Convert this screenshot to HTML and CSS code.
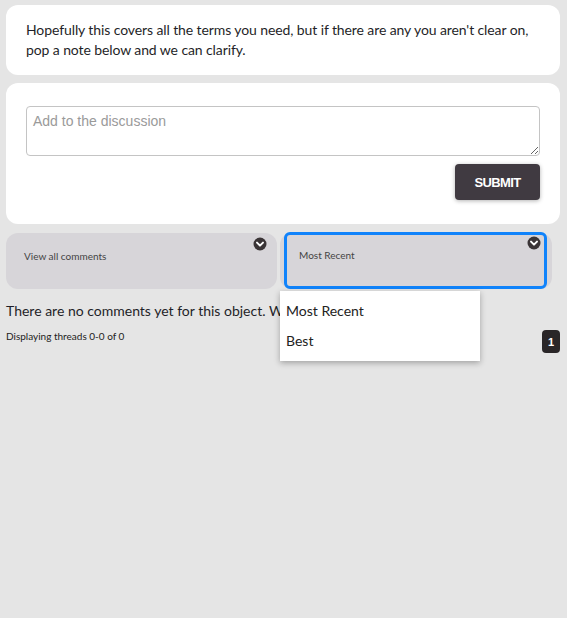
FILE: index.html
```html
<!DOCTYPE html>
<html lang="en">
<head>
  <meta charset="UTF-8"/>
  <title>Discussion</title>
  <link rel="stylesheet" href="styles.css">
</head>
<body>
  <div class="card intro">
    Hopefully this covers all the terms you need, but if there are any you aren't clear on, pop a note below and we can clarify.
  </div>

  <div class="card composer">
    <textarea placeholder="Add to the discussion"></textarea>
    <div class="composer-actions">
      <button class="submit-btn">SUBMIT</button>
    </div>
  </div>

  <div class="filters">
    <div class="select-box">
      <span>View all comments</span>
      <svg class="chevron" viewBox="0 0 14 14" width="14" height="14">
        <circle cx="7" cy="7" r="6.5" fill="#3a3436"/>
        <path d="M4 5.6 L7 8.6 L10 5.6" stroke="#fff" stroke-width="2" fill="none" stroke-linecap="round" stroke-linejoin="round"/>
      </svg>
    </div>
    <div class="select-wrap">
      <div class="select-box focused">
        <span>Most Recent</span>
        <svg class="chevron" viewBox="0 0 14 14" width="14" height="14">
          <circle cx="7" cy="7" r="6.5" fill="#3a3436"/>
          <path d="M4 5.6 L7 8.6 L10 5.6" stroke="#fff" stroke-width="2" fill="none" stroke-linecap="round" stroke-linejoin="round"/>
        </svg>
      </div>
      <ul class="dropdown">
        <li>Most Recent</li>
        <li>Best</li>
      </ul>
    </div>
  </div>

  <p class="empty">There are no comments yet for this object. Why not add one?</p>

  <div class="threads">
    <span>Displaying threads 0-0 of 0</span>
    <span class="page">1</span>
  </div>
</body>
</html>
```

FILE: styles.css
```css
body {
  margin: 0;
  min-height: 100vh;
  box-sizing: border-box;
  padding: 5px 7px 0 6px;
  background: #e5e5e5;
  font-family: Lato, "Open Sans", sans-serif;
  color: #222;
}
.card {
  background: #fff;
  border-radius: 12px;
}
.intro {
  padding: 15px 20px 15px;
  font-size: 14px;
  letter-spacing: -0.1px;
  line-height: 20px;
  color: #1f1f28;
}
.composer {
  margin-top: 8px;
  padding: 23px 20px 24px;
}
.composer textarea {
  display: block;
  box-sizing: border-box;
  width: 100%;
  height: 50px;
  padding: 6px 6px;
  border: 1px solid #c4c4c4;
  border-radius: 4px;
  font-family: "Liberation Sans", Arial, sans-serif;
  font-size: 14px;
  resize: vertical;
}
.composer textarea::placeholder { color: #9a9a9a; }
.composer-actions {
  display: flex;
  justify-content: flex-end;
  margin-top: 8px;
}
.submit-btn {
  width: 85px;
  height: 36px;
  border: none;
  border-radius: 4px;
  background: #403a41;
  color: #fff;
  font-family: "Liberation Sans", Arial, sans-serif;
  font-size: 13px;
  letter-spacing: -0.6px;
  font-weight: bold;
  box-shadow: 0 1px 4px rgba(0,0,0,0.3);
}
.filters {
  display: flex;
  gap: 3px;
  margin-top: 9px;
}
.select-box {
  position: relative;
  flex: 0 0 271px;
  box-sizing: border-box;
  height: 56px;
  padding: 16px 18px 0;
  background: #d7d5d9;
  border-radius: 12px;
  font-size: 10px;
  line-height: 14px;
  color: #444;
}
.chevron {
  position: absolute;
  top: 4px;
  right: 10px;
}
.select-wrap {
  position: relative;
  flex: 0 0 272px;
  box-sizing: border-box;
  height: 56px;
  padding: 0 5px 0 4px;
  background: #d7d5d9;
  border-radius: 12px;
}
.select-box.focused {
  height: 57px;
  margin-top: -1px;
  padding: 13px 12px 0;
  border: 3px solid #1083fb;
  border-radius: 6px;
}
.select-box.focused .chevron { top: 1px; right: 3px; }
.dropdown {
  position: absolute;
  top: 58px;
  left: 0;
  width: 200px;
  margin: 0;
  padding: 5px 0;
  list-style: none;
  background: #fff;
  box-shadow: 0 2px 6px rgba(0,0,0,0.3);
  z-index: 2;
}
.dropdown li {
  padding: 0 6px;
  height: 30px;
  line-height: 30px;
  font-size: 14px;
  color: #222;
}
.empty {
  margin: 12px 0 0;
  font-size: 14px;
  line-height: 20px;
  color: #1f1f28;
}
.threads {
  display: flex;
  justify-content: space-between;
  align-items: flex-start;
  margin-top: 9px;
  font-size: 10px;
  line-height: 12px;
  color: #222;
}
.page {
  width: 18px;
  height: 23px;
  border-radius: 4px;
  background: #2a2628;
  color: #fff;
  font-family: "Liberation Sans", Arial, sans-serif;
  font-weight: bold;
  font-size: 11px;
  display: flex;
  align-items: center;
  justify-content: center;
}
```
